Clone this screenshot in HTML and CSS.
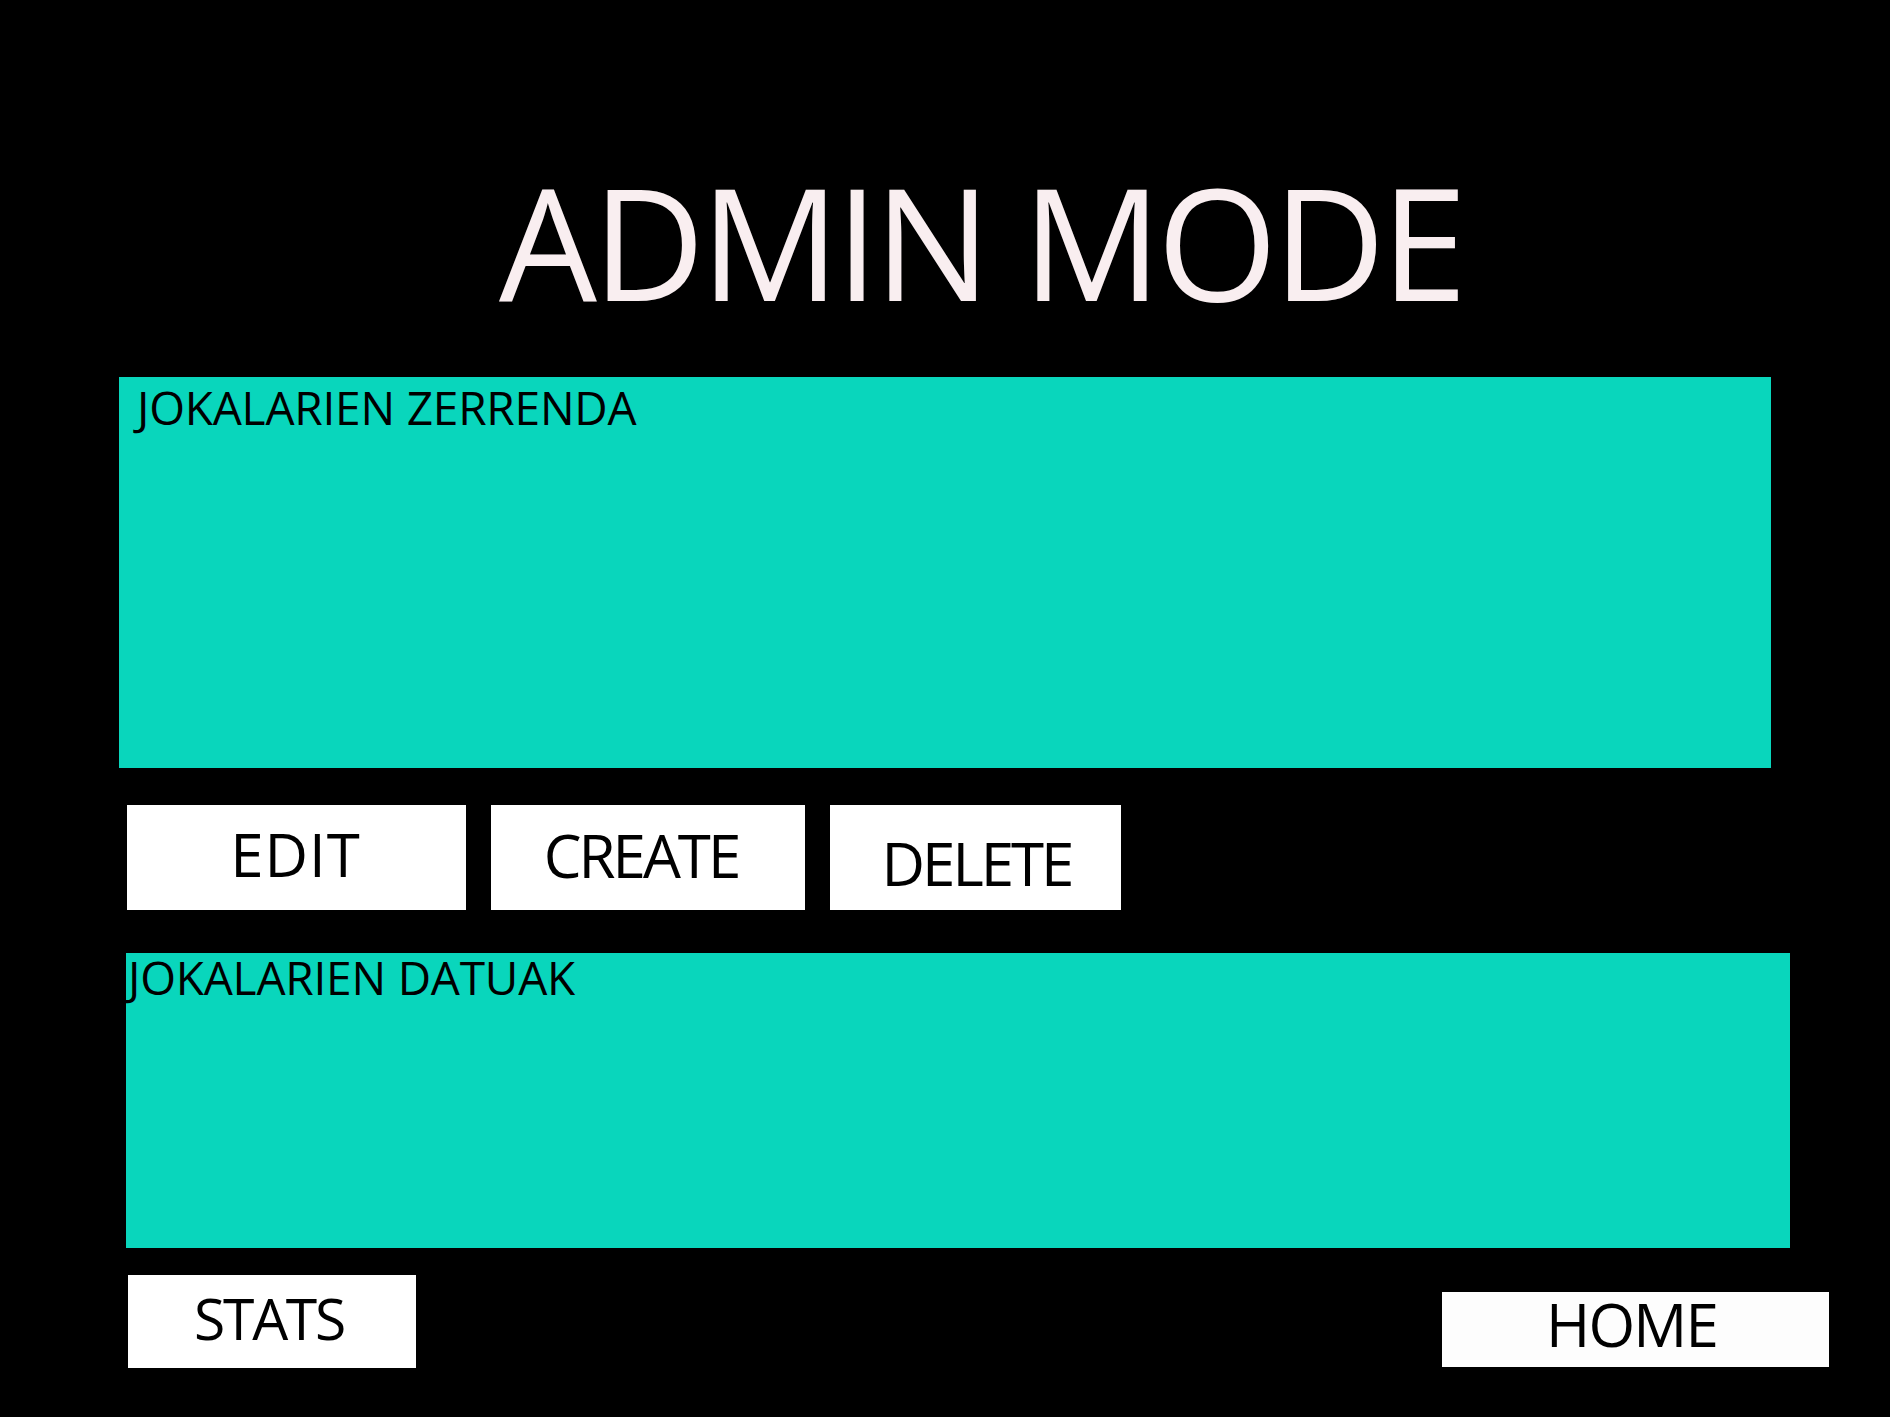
FILE: index.html
```html
<!DOCTYPE html>
<html lang="eu">
<head>
<meta charset="utf-8">
<title>Admin Mode</title>
<link rel="stylesheet" href="styles.css">
</head>
<body>
<main class="screen">
  <h1 class="title">ADMIN MODE</h1>
  <section class="panel panel-list">
    <h2 class="panel-label">JOKALARIEN ZERRENDA</h2>
  </section>
  <div class="actions">
    <button class="btn btn-edit">EDIT</button>
    <button class="btn btn-create">CREATE</button>
    <button class="btn btn-delete">DELETE</button>
  </div>
  <section class="panel panel-data">
    <h2 class="panel-label">JOKALARIEN DATUAK</h2>
  </section>
  <footer class="nav">
    <button class="btn btn-stats">STATS</button>
    <button class="btn btn-home">HOME</button>
  </footer>
</main>
</body>
</html>
```

FILE: styles.css
```css
* { box-sizing: border-box; }

html, body {
  margin: 0;
  padding: 0;
  background: #000;
}

body {
  width: 1890px;
  height: 1417px;
  overflow: hidden;
  font-family: "Open Sans", "Noto Sans", sans-serif;
  color: #000;
}

.screen {
  display: flex;
  flex-direction: column;
  align-items: flex-start;
}

.title {
  margin: 163px 0 0 499px;
  font-size: 155px;
  line-height: 1;
  font-weight: 400;
  letter-spacing: -4.5px;
  color: #f9eef0;
  white-space: nowrap;
}

.panel {
  background: #09d6bc;
}

.panel-list {
  margin: 59px 0 0 119px;
  width: 1652px;
  height: 391px;
  padding: 7px 0 0 18px;
}

.panel-data {
  margin: 43px 0 0 126px;
  width: 1664px;
  height: 295px;
  padding: 1px 0 0 2px;
}

.panel-label {
  margin: 0;
  font-size: 46px;
  line-height: 1;
  font-weight: 400;
  letter-spacing: -0.2px;
  white-space: nowrap;
}

.actions {
  margin: 37px 0 0 127px;
  display: flex;
  gap: 25px;
}

.btn {
  display: flex;
  align-items: center;
  justify-content: center;
  border: 0;
  padding: 0;
  margin: 0;
  background: #fff;
  color: #000;
  font-family: "Open Sans", "Noto Sans", sans-serif;
  font-weight: 400;
  font-size: 60px;
  line-height: 1;
  letter-spacing: -3px;
}

.btn-edit { width: 339px; height: 105px; padding-bottom: 8px; padding-right: 2px; letter-spacing: 1px; }
.btn-create { width: 314px; height: 105px; padding-bottom: 5px; padding-right: 14px; }
.btn-delete { width: 291px; height: 105px; padding-top: 10px; padding-left: 2px; }

.nav {
  margin: 27px 0 0 128px;
  width: 1701px;
  display: flex;
  justify-content: space-between;
  align-items: flex-start;
}

.btn-stats {
  width: 288px;
  height: 93px;
  font-size: 57px;
  letter-spacing: -2.3px;
  padding-right: 6px;
  padding-bottom: 7px;
}

.btn-home {
  margin-top: 17px;
  width: 387px;
  height: 75px;
  background: #fdfdfd;
  letter-spacing: -1.8px;
  padding-right: 8px;
  padding-bottom: 12px;
}
```
